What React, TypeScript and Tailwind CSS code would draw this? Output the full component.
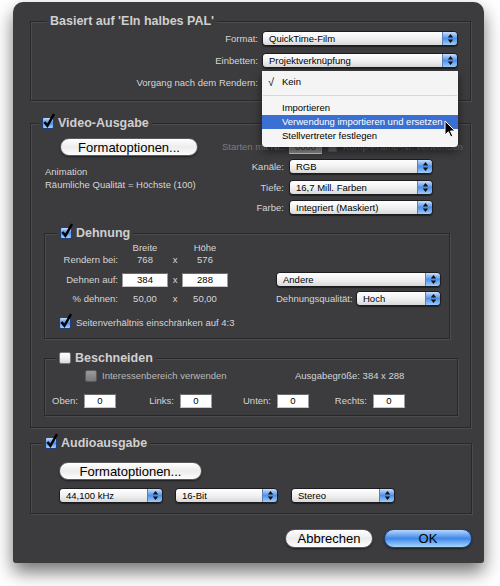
import { ReactNode } from 'react'

const win = 'bg-[#3c3b3e]'
const label = 'text-[9.5px] leading-[12px] text-[#d6d6d6] whitespace-nowrap'

function Arrows() {
  return (
    <svg width="7" height="11" viewBox="0 0 7 11">
      <path d="M3.5 1 L6.2 4.6 H0.8 Z M3.5 10 L6.2 6.4 H0.8 Z" fill="#111" />
    </svg>
  )
}

function Popup({ className, text }: { className: string; text: string }) {
  return (
    <div
      className={`flex h-[15px] shrink-0 overflow-hidden rounded-[4px] border border-[#1d1c1e] shadow-[0_1px_1px_rgba(0,0,0,0.45)] ${className}`}
    >
      <div className="flex flex-1 items-center bg-gradient-to-b from-white via-[#f1f1f1] to-[#d9d9d9] pl-[6px] text-[9.5px] leading-[12px] whitespace-nowrap text-black">
        {text}
      </div>
      <div className="flex w-[15px] items-center justify-center border-l border-[#5a80b8] bg-gradient-to-b from-[#c9e0fc] via-[#4f90e6] to-[#9fcdfb]">
        <Arrows />
      </div>
    </div>
  )
}

function Check({ on = true, dim = false }: { on?: boolean; dim?: boolean }) {
  if (!on) {
    return (
      <span
        className={`inline-block h-[12px] w-[12px] shrink-0 rounded-[2px] border ${
          dim
            ? 'border-[#5c5c5c] bg-gradient-to-b from-[#9a9a9a] to-[#7a7a7a]'
            : 'border-[#777] bg-gradient-to-b from-white via-[#f0f0f0] to-[#dadada]'
        }`}
      />
    )
  }
  return (
    <span className="relative inline-block h-[12px] w-[12px] shrink-0 rounded-[2px] border border-[#20427c] bg-gradient-to-b from-[#c3dcfb] via-[#4a8ce6] to-[#a6d2fb]">
      <svg className="absolute -top-[5px] -left-[1px]" width="14" height="16" viewBox="0 0 14 16">
        <path d="M2.5 9 L5.4 12.8 L12 1.2" stroke="#000" strokeWidth="2.5" fill="none" strokeLinejoin="miter" />
      </svg>
    </span>
  )
}

function Field({ className, text, dim = false }: { className: string; text: string; dim?: boolean }) {
  return (
    <div
      className={`flex h-[14px] shrink-0 items-center justify-center border border-t-[#6b6b6b] border-x-[#9a9a9a] border-b-[#c8c8c8] text-[9.5px] leading-[12px] ${
        dim ? 'bg-[#8e8e8e] text-[#3a3a3a]' : 'bg-white text-black'
      } ${className}`}
    >
      {text}
    </div>
  )
}

function Button({ className, text, blue = false }: { className: string; text: string; blue?: boolean }) {
  return (
    <div
      className={`flex shrink-0 items-center justify-center rounded-full border text-[13px] leading-none text-black shadow-[0_1px_2px_rgba(0,0,0,0.5)] ${
        blue
          ? 'border-[#1e3f7a] bg-gradient-to-b from-[#b4d6fb] via-[#3f88e8] to-[#a6d6fc]'
          : 'border-[#5b5b5b] bg-gradient-to-b from-white via-[#ececec] to-[#fdfdfd]'
      } ${className}`}
    >
      {text}
    </div>
  )
}

function Group({
  className,
  titleClass,
  title,
  check,
  children,
}: {
  className: string
  titleClass: string
  title: string
  check?: ReactNode
  children: ReactNode
}) {
  return (
    <div
      className={`box-border shrink-0 border border-[#28272a] shadow-[inset_1px_1px_0_#4c4b4e,1px_1px_0_#4c4b4e] ${className}`}
    >
      <div className={`-mt-[10px] flex h-[18px] ${titleClass}`}>
        <div className={`flex items-center gap-[4px] px-[3px] ${win}`}>
          {check}
          <span className="text-[12.5px] leading-[16px] font-bold text-[#cfcfcf]">{title}</span>
        </div>
      </div>
      {children}
    </div>
  )
}

function Cursor() {
  return (
    <svg width="12" height="18" viewBox="0 0 12 18">
      <path
        d="M1 1 L1 15 L4.4 11.8 L6.8 17 L8.8 16.1 L6.5 11 L11 11 Z"
        fill="#000"
        stroke="#fff"
        strokeWidth="1"
        strokeLinejoin="round"
      />
    </svg>
  )
}

export default function App() {
  return (
    <div className="h-[586px] w-[500px] overflow-hidden bg-white pt-[2px] font-['Liberation_Sans',Arial,sans-serif]">
      <div
        className={`relative ml-[13px] h-[561px] w-[471px] rounded-t-[10px] rounded-b-[3px] ${win} pt-[19px] pl-[17px] shadow-[0_9px_18px_rgba(0,0,0,0.55)]`}
      >
        {/* Basiert auf */}
        <Group className="h-[80px] w-[441px]" titleClass="pl-[16px]" title="Basiert auf 'EIn halbes PAL'">
          <div className="mt-[1px] flex flex-col gap-[7px]">
            <div className="flex h-[15px] items-center">
              <span className={`${label} w-[227px] text-right`}>Format:</span>
              <Popup className="ml-[4px] w-[196px]" text="QuickTime-Film" />
            </div>
            <div className="flex h-[15px] items-center">
              <span className={`${label} w-[227px] text-right`}>Einbetten:</span>
              <Popup className="ml-[4px] w-[196px]" text="Projektverknüpfung" />
            </div>
            <div className="flex h-[15px] items-center">
              <span className={`${label} w-[227px] text-right`}>Vorgang nach dem Rendern:</span>
              <Popup className="ml-[4px] w-[196px]" text="" />
            </div>
          </div>
        </Group>

        {/* Video-Ausgabe */}
        <Group className="mt-[22px] h-[305px] w-[441px]" titleClass="pl-[8px]" title="Video-Ausgabe" check={<Check />}>
          <div className="mt-[6px] flex h-[18px] items-center pl-[29px]">
            <Button className="h-[18px] w-[138px]" text="Formatoptionen..." />
            <span className="ml-[24px] w-[62px] text-[9.5px] leading-[12px] whitespace-nowrap text-[#7d7c80]">
              Starten mit Nr.:
            </span>
            <Field className="ml-[5px] w-[33px]" text="0000" dim />
            <span className="ml-[6px] inline-block h-[9px] w-[9px] border border-[#555] bg-[#6a6a6a]" />
            <span className="ml-[6px] text-[9.5px] leading-[12px] whitespace-nowrap text-[#6f6e72]">
              Komp-Frame-Nr. verwenden
            </span>
          </div>
          <div className="flex">
            <div className="w-[199px] pt-[9px] pl-[14px] text-[9.5px] leading-[13px] text-[#d6d6d6]">
              <div>Animation</div>
              <div>Räumliche Qualität = Höchste (100)</div>
            </div>
            <div className="flex flex-col pt-[3px]">
              <div className="flex h-[15px] items-center">
                <span className={`${label} w-[54px] text-right`}>Kanäle:</span>
                <Popup className="ml-[5px] w-[144px]" text="RGB" />
              </div>
              <div className="mt-[6px] flex h-[15px] items-center">
                <span className={`${label} w-[54px] text-right`}>Tiefe:</span>
                <Popup className="ml-[5px] w-[144px]" text="16,7 Mill. Farben" />
              </div>
              <div className="mt-[5px] flex h-[15px] items-center">
                <span className={`${label} w-[54px] text-right`}>Farbe:</span>
                <Popup className="ml-[5px] w-[144px]" text="Integriert (Maskiert)" />
              </div>
            </div>
          </div>

          {/* Dehnung */}
          <Group className="mt-[18px] ml-[13px] h-[106px] w-[406px]" titleClass="pl-[12px]" title="Dehnung" check={<Check />}>
            <div className={`flex h-[12px] items-center ${label}`}>
              <span className="w-[77px]" />
              <span className="w-[46px] text-center">Breite</span>
              <span className="w-[14px]" />
              <span className="w-[46px] text-center">Höhe</span>
            </div>
            <div className={`flex h-[12px] items-center ${label}`}>
              <span className="w-[73px] text-right">Rendern bei:</span>
              <span className="ml-[4px] w-[46px] text-center">768</span>
              <span className="w-[14px] text-center">x</span>
              <span className="w-[46px] text-center">576</span>
            </div>
            <div className="mt-[6px] flex h-[15px] items-center">
              <span className={`${label} w-[73px] text-right`}>Dehnen auf:</span>
              <Field className="ml-[4px] w-[46px]" text="384" />
              <span className={`${label} w-[14px] text-center`}>x</span>
              <Field className="w-[46px]" text="288" />
              <Popup className="ml-[48px] w-[165px]" text="Andere" />
            </div>
            <div className={`mt-[4px] flex h-[15px] items-center ${label}`}>
              <span className="w-[73px] text-right">% dehnen:</span>
              <span className="ml-[4px] w-[46px] text-center">50,00</span>
              <span className="w-[14px] text-center">x</span>
              <span className="w-[46px] text-center">50,00</span>
              <span className="ml-[48px] w-[75px] text-right">Dehnungsqualität:</span>
              <Popup className="ml-[5px] w-[85px]" text="Hoch" />
            </div>
            <div className="mt-[10px] flex h-[13px] items-center gap-[5px] pl-[14px]">
              <Check />
              <span className={label}>Seitenverhältnis einschränken auf 4:3</span>
            </div>
          </Group>

          {/* Beschneiden */}
          <Group
            className="mt-[19px] ml-[13px] h-[58px] w-[414px]"
            titleClass="pl-[11px]"
            title="Beschneiden"
            check={<Check on={false} />}
          >
            <div className="mt-[3px] flex h-[12px] items-center pl-[40px]">
              <div className="flex w-[210px] items-center gap-[5px]">
                <Check on={false} dim />
                <span className="text-[9.5px] leading-[12px] whitespace-nowrap text-[#b9b9b9]">
                  Interessenbereich verwenden
                </span>
              </div>
              <span className={label}>Ausgabegröße: 384 x 288</span>
            </div>
            <div className="mt-[12px] flex h-[14px] items-center">
              <span className={`${label} w-[33px] text-right`}>Oben:</span>
              <Field className="ml-[6px] w-[32px]" text="0" />
              <span className={`${label} w-[58px] text-right`}>Links:</span>
              <Field className="ml-[6px] w-[32px]" text="0" />
              <span className={`${label} w-[59px] text-right`}>Unten:</span>
              <Field className="ml-[6px] w-[32px]" text="0" />
              <span className={`${label} w-[58px] text-right`}>Rechts:</span>
              <Field className="ml-[6px] w-[32px]" text="0" />
            </div>
          </Group>
        </Group>

        {/* Audioausgabe */}
        <Group className="mt-[15px] h-[71px] w-[442px]" titleClass="pl-[11px]" title="Audioausgabe" check={<Check />}>
          <div className="mt-[10px] pl-[28px]">
            <Button className="h-[18px] w-[143px]" text="Formatoptionen..." />
          </div>
          <div className="mt-[8px] flex pl-[28px]">
            <Popup className="w-[104px]" text="44,100 kHz" />
            <Popup className="ml-[12px] w-[103px]" text="16-Bit" />
            <Popup className="ml-[13px] w-[104px]" text="Stereo" />
          </div>
        </Group>

        <div className="mt-[15px] flex w-[442px] justify-end gap-[11px]">
          <Button className="h-[19px] w-[88px]" text="Abbrechen" />
          <Button className="h-[19px] w-[88px]" text="OK" blue />
        </div>

        {/* open popup menu */}
        <div className="absolute top-[69px] left-[249px] h-[76px] w-[196px] rounded-b-[4px] bg-white/95 pt-[3px] text-[9.5px] leading-[14px] text-black shadow-[0_4px_10px_rgba(0,0,0,0.55)]">
          <div className="flex h-[16px] items-center bg-[#f4f4f4]">
            <span className="w-[20px] pl-[6px] text-[11px]">√</span>
            <span>Kein</span>
          </div>
          <div className="mx-[1px] my-[5px] h-[1px] bg-[#d6d6d6]" />
          <div className="h-[14px] pl-[20px]">Importieren</div>
          <div className="h-[14px] bg-[#3b6fd1] pl-[20px] text-white">Verwendung importieren und ersetzen</div>
          <div className="h-[14px] pl-[20px]">Stellvertreter festlegen</div>
        </div>
        <div className="absolute top-[118px] left-[431px]">
          <Cursor />
        </div>
      </div>
    </div>
  )
}
